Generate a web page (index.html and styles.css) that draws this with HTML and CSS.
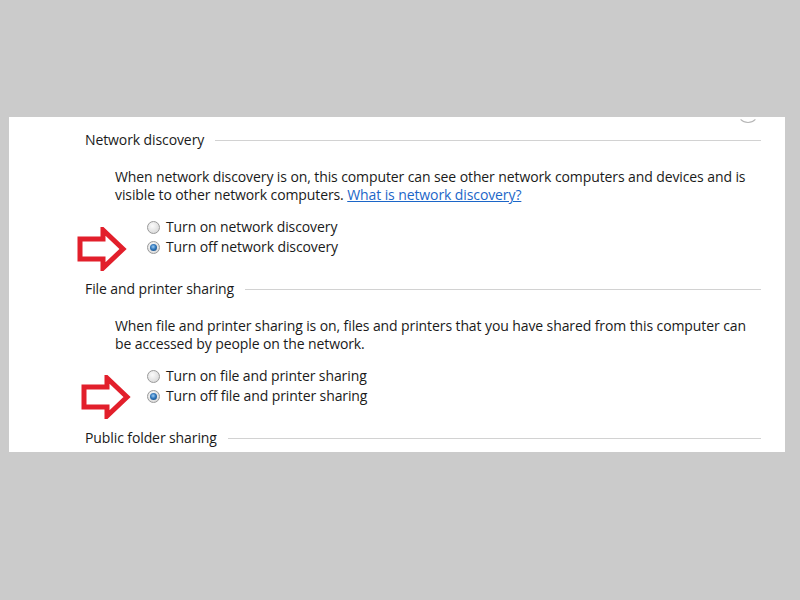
FILE: index.html
```html
<!DOCTYPE html>
<html>
<head>
<meta charset="utf-8">
<link rel="stylesheet" href="styles.css">
</head>
<body>
<div class="panel">
  <span class="corner"></span>
  <section class="group">
    <div class="heading"><span>Network discovery</span><span class="rule"></span></div>
    <p class="desc">When network discovery is on, this computer can see other network computers and devices and is visible to other network computers. <a href="#" class="link">What is network discovery?</a></p>
    <div class="options">
      <svg class="arrow" width="50" height="44" viewBox="0 0 50 44"><path d="M3 12 H26 V3 L46 22 L26 41 V32 H3 Z" fill="none" stroke="#e21f2b" stroke-width="5" stroke-linejoin="miter"/></svg>
      <label class="opt"><span class="radio"></span>Turn on network discovery</label>
      <label class="opt"><span class="radio on"></span>Turn off network discovery</label>
    </div>
  </section>
  <section class="group">
    <div class="heading"><span>File and printer sharing</span><span class="rule"></span></div>
    <p class="desc">When file and printer sharing is on, files and printers that you have shared from this computer can be accessed by people on the network.</p>
    <div class="options">
      <svg class="arrow arrow2" width="50" height="44" viewBox="0 0 50 44"><path d="M3 12 H26 V3 L46 22 L26 41 V32 H3 Z" fill="none" stroke="#e21f2b" stroke-width="5" stroke-linejoin="miter"/></svg>
      <label class="opt"><span class="radio"></span>Turn on file and printer sharing</label>
      <label class="opt"><span class="radio on"></span>Turn off file and printer sharing</label>
    </div>
  </section>
  <section class="group">
    <div class="heading"><span>Public folder sharing</span><span class="rule"></span></div>
  </section>
</div>
</body>
</html>
```
FILE: styles.css
```css
html, body {
  margin: 0;
  padding: 0;
  background: #cbcbcb;
  height: 100%;
}
body {
  font-family: "Open Sans", "Noto Sans", sans-serif;
  font-size: 14px;
  letter-spacing: -0.1px;
  color: #1a1a1a;
  padding-top: 117px;
  box-sizing: border-box;
}
.panel {
  position: relative;
  margin-left: 9px;
  width: 776px;
  height: 335px;
  background: #fff;
  box-sizing: border-box;
  padding: 13px 24px 0 76px;
}
.corner {
  position: absolute;
  right: 26px;
  top: -16px;
  width: 20px;
  height: 20px;
  border-radius: 50%;
  border: 1px solid transparent;
  border-bottom-color: #b5b5b5;
}
.group + .group {
  margin-top: 22px;
}
.heading {
  display: flex;
  align-items: center;
  height: 20px;
  line-height: 20px;
}
.rule {
  flex: 1;
  height: 1px;
  background: #d2d2d2;
  margin-left: 11px;
}
.desc {
  margin: 18px 0 0 30px;
  line-height: 18px;
}
.link {
  color: #1c66c8;
  text-decoration: underline;
}
.options {
  position: relative;
  margin: 13px 0 0 62px;
}
.opt {
  display: flex;
  align-items: center;
  height: 20px;
  line-height: 20px;
}
.radio {
  width: 11px;
  height: 11px;
  border-radius: 50%;
  border: 1px solid #9a9a9a;
  background: radial-gradient(circle at 40% 35%, #fbfbfb 0%, #e2e2e2 60%, #cfcfcf 100%);
  margin-right: 6px;
  display: inline-flex;
  align-items: center;
  justify-content: center;
}
.radio.on::after {
  content: "";
  width: 7px;
  height: 7px;
  border-radius: 50%;
  background: radial-gradient(circle at 45% 40%, #9fcdf3 0%, #2f76bb 45%, #123f70 100%);
}
.arrow {
  position: absolute;
  left: -70px;
  top: 10px;
}
.arrow2 {
  left: -66px;
  top: 9px;
}
```
